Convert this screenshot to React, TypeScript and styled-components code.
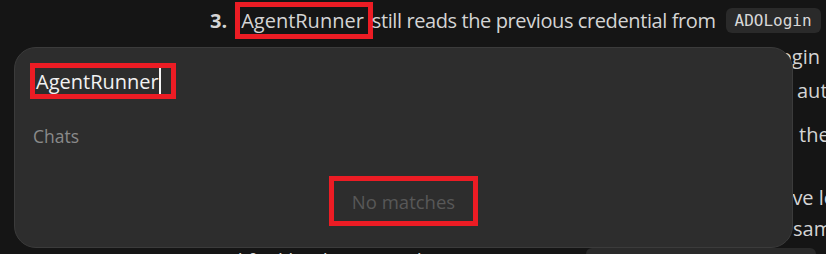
import React from 'react';
import styled, { createGlobalStyle } from 'styled-components';

const Global = createGlobalStyle`
  html, body { margin: 0; padding: 0; background: #151515; }
  body { width: 826px; height: 254px; overflow: hidden; font-family: "Open Sans", "Noto Sans", sans-serif; }
`;

const Page = styled.div`
  position: relative;
  width: 826px;
  height: 254px;
  overflow: hidden;
  background: #151515;
  color: #d4d4d4;
`;

const Doc = styled.div`
  display: flex;
  flex-direction: column;
`;

const Line = styled.div<{ $mt: number; $indent?: number; $end?: number }>`
  height: 30px;
  margin-top: ${p => p.$mt}px;
  display: flex;
  align-items: center;
  white-space: nowrap;
  font-size: 20px;
  padding-left: ${p => p.$indent ?? 0}px;
  padding-right: ${p => p.$end ?? 0}px;
  justify-content: ${p => (p.$end !== undefined ? 'flex-end' : 'flex-start')};
  gap: 10px;
`;

const Item = styled.span`
  display: inline-flex;
  align-items: center;
`;

const Num = styled.span`
  font-weight: 700;
  margin-right: 13px;
`;

const Mark = styled.span`
  outline: 5px solid #ec1c24;
  padding: 0 4px 0 1px;
  margin-right: 4px;
`;

const Tight = styled.span`
  letter-spacing: -0.4px;
`;

const Code = styled.span`
  font-family: "DejaVu Sans Mono", "Liberation Mono", monospace;
  font-size: 16px;
  background: #2a2a2a;
  border-radius: 6px;
  padding: 3px 9px;
  color: #d8d8d8;
`;

const Panel = styled.div`
  position: absolute;
  left: 14px;
  top: 47px;
  width: 779px;
  height: 201px;
  box-sizing: border-box;
  background: #2d2d2d;
  border: 1px solid #3b3b3b;
  border-radius: 22px;
  display: flex;
  flex-direction: column;
  padding: 20px 20px 0 20px;
`;

const InputRow = styled.div`
  display: flex;
  align-items: center;
  height: 26px;
`;

const Query = styled.span`
  display: inline-flex;
  align-items: center;
  height: 26px;
  padding: 0 10px 0 1px;
  outline: 5px solid #ec1c24;
  font-size: 20px;
  color: #f2f2f2;
`;

const Caret = styled.span`
  display: inline-block;
  width: 2px;
  height: 26px;
  background: #f5f5f5;
`;

const Section = styled.div`
  margin-top: 30px;
  margin-left: -2px;
  font-size: 17.5px;
  color: #8a8a8a;
`;

const Empty = styled.div`
  flex: 1;
  display: flex;
  justify-content: center;
  align-items: flex-start;
  padding-top: 33px;
`;

const EmptyText = styled.span`
  display: inline-flex;
  align-items: center;
  height: 40px;
  padding: 0 18px;
  outline: 5px solid #ec1c24;
  font-size: 18.5px;
  color: #585858;
`;

export default function App() {
  return (
    <Page>
      <Global />
      <Doc>
        <Line $mt={5} $indent={210}>
          <Item>
            <Num>3.</Num>
            <Mark>AgentRunner</Mark>
            <Tight>still reads the previous credential from</Tight>
          </Item>
          <Code>ADOLogin</Code>
        </Line>
        <Line $mt={6} $end={6}>so the cached token is reused after a new login</Line>
        <Line $mt={4} $indent={797}>automatically</Line>
        <Line $mt={14} $indent={799}>the</Line>
        <Line $mt={33} $indent={769}>have logged in</Line>
        <Line $mt={1} $indent={793}>same</Line>
        <Line $mt={2} $indent={200}>
          modified by the manual run, so it reuses <Code>Get-AzAccessToken call</Code>
        </Line>
      </Doc>
      <Panel>
        <InputRow>
          <Query>
            AgentRunner
            <Caret />
          </Query>
        </InputRow>
        <Section>Chats</Section>
        <Empty>
          <EmptyText>No matches</EmptyText>
        </Empty>
      </Panel>
    </Page>
  );
}
